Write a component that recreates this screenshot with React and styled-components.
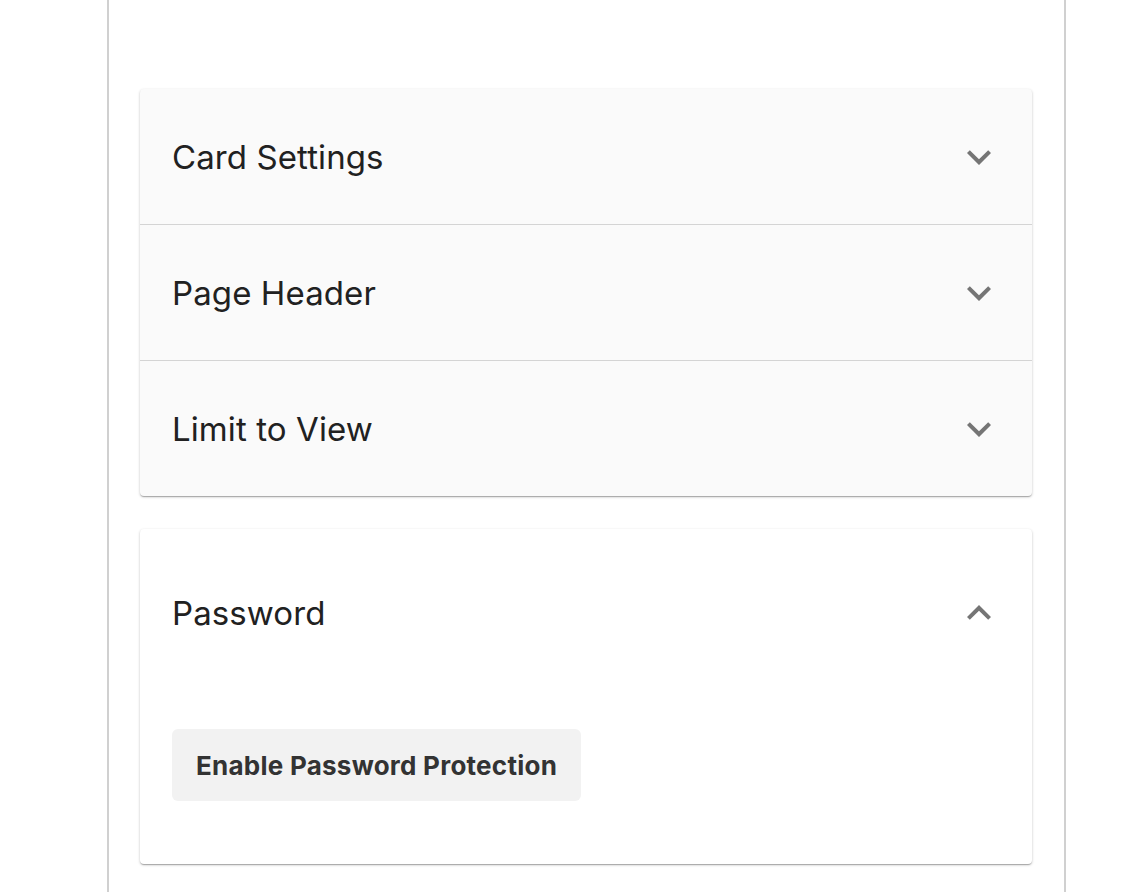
import React, { useState } from "react";
import styled, { createGlobalStyle } from "styled-components";

const GlobalStyle = createGlobalStyle`
  html, body {
    margin: 0;
    padding: 0;
    background: #ffffff;
    font-family: Inter, "Open Sans", "Liberation Sans", sans-serif;
    color: #212121;
  }
`;

const Page = styled.div`
  min-height: 892px;
  padding-left: 107px;
`;

const Frame = styled.div`
  width: 959px;
  min-height: 892px;
  border-left: 2px solid #d0d0d0;
  border-right: 2px solid #d0d0d0;
  padding: 89px 34px 28px 31px;
  box-sizing: border-box;
  display: flex;
  flex-direction: column;
  gap: 33px;
`;

const Group = styled.div`
  width: 892px;
  border-radius: 4px;
  overflow: hidden;
  box-shadow: 0 1px 3px rgba(0, 0, 0, 0.2), 0 1px 1px rgba(0, 0, 0, 0.14),
    0 2px 1px -1px rgba(0, 0, 0, 0.12);
  background: ${(p) => (p.$open ? "#ffffff" : "#fafafa")};
`;

const Row = styled.div`
  & + & {
    border-top: 1px solid #d4d4d4;
  }
`;

const Header = styled.button`
  width: 100%;
  height: ${(p) => (p.$open ? "168px" : "135px")};
  padding: 0 29px 0 32px;
  border: none;
  background: transparent;
  display: flex;
  align-items: center;
  justify-content: space-between;
  cursor: pointer;
  font-family: inherit;
`;

const Title = styled.span`
  font-size: 33px;
  font-weight: 400;
  color: #212121;
  letter-spacing: 0.1px;
`;

const Body = styled.div`
  padding: 32px 32px 63px;
`;

const Button = styled.button`
  height: 72px;
  padding: 0 24px;
  border: none;
  border-radius: 6px;
  background: #f2f2f2;
  color: #333333;
  font-family: inherit;
  font-size: 26px;
  font-weight: 700;
  letter-spacing: 0.25px;
  cursor: pointer;
`;

const Chevron = ({ up }) => (
  <svg width="48" height="48" viewBox="0 0 24 24" aria-hidden="true">
    <path
      d={up ? "M7.41 15.41 12 10.83l4.59 4.58L18 14l-6-6-6 6z" : "M7.41 8.59 12 13.17l4.59-4.58L18 10l-6 6-6-6z"}
      fill="#757575"
    />
  </svg>
);

const sections = ["Card Settings", "Page Header", "Limit to View"];

export default function App() {
  const [open, setOpen] = useState(true);
  return (
    <Page>
      <GlobalStyle />
      <Frame>
        <Group>
          {sections.map((s) => (
            <Row key={s}>
              <Header>
                <Title>{s}</Title>
                <Chevron />
              </Header>
            </Row>
          ))}
        </Group>
        <Group $open>
          <Header $open onClick={() => setOpen(!open)}>
            <Title>Password</Title>
            <Chevron up={open} />
          </Header>
          {open && (
            <Body>
              <Button>Enable Password Protection</Button>
            </Body>
          )}
        </Group>
      </Frame>
    </Page>
  );
}
